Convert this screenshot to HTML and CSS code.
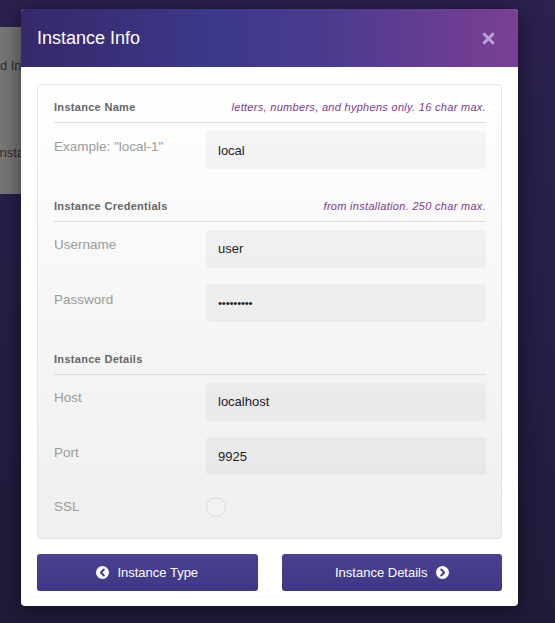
FILE: index.html
```html
<!DOCTYPE html>
<html lang="en">
<head>
<meta charset="utf-8">
<title>Instance Info</title>
<link rel="stylesheet" href="styles.css">
</head>
<body>
<div class="bg-card">
  <div class="bg-line first">Add Instance</div>
  <div class="bg-line second">Instances</div>
</div>

<div class="modal">
  <div class="modal-header">
    <div class="title">Instance Info</div>
    <svg class="close" viewBox="0 0 14 14" width="13" height="13"><path d="M2.4 2.4 L11.6 11.6 M11.6 2.4 L2.4 11.6" stroke="#b9a2d6" stroke-width="3.3" stroke-linecap="round" fill="none"/></svg>
  </div>
  <div class="modal-body">
    <div class="panel">
      <div class="section">
        <div class="section-head">
          <span class="section-title">Instance Name</span>
          <span class="hint">letters, numbers, and hyphens only. 16 char max.</span>
        </div>
        <div class="row">
          <div class="label">Example: "local-1"</div>
          <div class="field">local</div>
        </div>
      </div>

      <div class="section">
        <div class="section-head">
          <span class="section-title">Instance Credentials</span>
          <span class="hint">from installation. 250 char max.</span>
        </div>
        <div class="row">
          <div class="label">Username</div>
          <div class="field">user</div>
        </div>
        <div class="row">
          <div class="label">Password</div>
          <div class="field"><span class="dots">•••••••••</span></div>
        </div>
      </div>

      <div class="section">
        <div class="section-head">
          <span class="section-title">Instance Details</span>
        </div>
        <div class="row">
          <div class="label">Host</div>
          <div class="field">localhost</div>
        </div>
        <div class="row">
          <div class="label">Port</div>
          <div class="field">9925</div>
        </div>
        <div class="row row-ssl">
          <div class="label">SSL</div>
          <div class="radio"></div>
        </div>
      </div>
    </div>

    <div class="actions">
      <div class="btn">
        <svg viewBox="0 0 16 16" width="13" height="13"><circle cx="8" cy="8" r="8" fill="#fff"/><path d="M9.6 4.4 L6 8 L9.6 11.6" stroke="#443c8a" stroke-width="2.5" fill="none" stroke-linecap="round" stroke-linejoin="round"/></svg>
        <span>Instance Type</span>
      </div>
      <div class="btn">
        <span>Instance Details</span>
        <svg viewBox="0 0 16 16" width="13" height="13"><circle cx="8" cy="8" r="8" fill="#fff"/><path d="M6.4 4.4 L10 8 L6.4 11.6" stroke="#443c8a" stroke-width="2.5" fill="none" stroke-linecap="round" stroke-linejoin="round"/></svg>
      </div>
    </div>
  </div>
</div>
</body>
</html>
```

FILE: styles.css
```css
html, body {
  margin: 0;
  padding: 0;
}

body {
  width: 555px;
  height: 623px;
  overflow: hidden;
  position: relative;
  font-family: "Liberation Sans", Arial, Helvetica, sans-serif;
  background: linear-gradient(180deg, #2c2150 0%, #271f48 45%, #1f1c3b 100%);
  padding-top: 9px;
  box-sizing: border-box;
}

.bg-card {
  position: absolute;
  left: -100px;
  top: 27px;
  width: 300px;
  height: 167px;
  background: #797979;
  color: #2e2e2e;
  font-size: 13px;
  line-height: 18px;
}

.bg-line.first {
  margin-top: 30px;
  padding-left: 84px;
}

.bg-line.second {
  margin-top: 69px;
  padding-left: 96px;
}

.modal {
  position: relative;
  z-index: 1;
  margin-left: 21px;
  width: 497px;
  background: #fff;
  border-radius: 4px;
  box-shadow: 0 4px 24px rgba(0, 0, 0, 0.55);
}

.modal-header {
  height: 58px;
  padding: 0 23px 0 16px;
  display: flex;
  align-items: center;
  justify-content: space-between;
  border-radius: 4px 4px 0 0;
  background: linear-gradient(90deg, #36286a 0%, #3c388a 38%, #4b3b8f 62%, #7b3f94 100%);
}

.title {
  color: #fff;
  font-size: 18px;
}

.close {
  display: block;
}

.modal-body {
  padding: 17px 16px 15px;
}

.panel {
  border: 1px solid #e3e3e3;
  border-radius: 4px;
  padding: 13px 15px 8px 16px;
  background: linear-gradient(180deg, #ffffff 0%, #f7f7f7 45%, #efefef 100%);
}

.section + .section {
  margin-top: 27.5px;
}

.section-head {
  display: flex;
  justify-content: space-between;
  align-items: baseline;
  line-height: 18px;
  padding-bottom: 6px;
  border-bottom: 1px solid #dcdcdc;
}

.section-title {
  font-size: 11px;
  font-weight: bold;
  color: #666;
  letter-spacing: 0.3px;
}

.hint {
  font-size: 11px;
  font-style: italic;
  color: #7c3a8d;
  letter-spacing: 0.3px;
}

.row {
  display: flex;
  margin-top: 16.5px;
}

.section-head + .row {
  margin-top: 8px;
}

.label {
  width: 152px;
  flex: none;
  font-size: 13.5px;
  line-height: 18px;
  padding-top: 6.5px;
  color: #9b9b9b;
}

.field {
  flex: 1;
  height: 38px;
  box-sizing: border-box;
  padding-left: 12px;
  display: flex;
  align-items: center;
  border-radius: 3px;
  background: rgba(0, 0, 0, 0.037);
  font-size: 13px;
  color: #222;
}

.dots {
  font-size: 11.5px;
  letter-spacing: -0.2px;
}

.row-ssl {
  height: 38px;
}

.radio {
  width: 20px;
  height: 20px;
  box-sizing: border-box;
  margin-top: 5px;
  border: 1px solid #dadada;
  border-radius: 50%;
  background: #f2f2f2;
}

.actions {
  display: flex;
  gap: 24px;
  margin-top: 15px;
}

.btn {
  flex: 1;
  height: 37px;
  border-radius: 3px;
  background: linear-gradient(180deg, #4a4291 0%, #3f3785 100%);
  color: #fff;
  font-size: 13px;
  display: flex;
  align-items: center;
  justify-content: center;
  gap: 8px;
}

.btn svg {
  display: block;
}
```
